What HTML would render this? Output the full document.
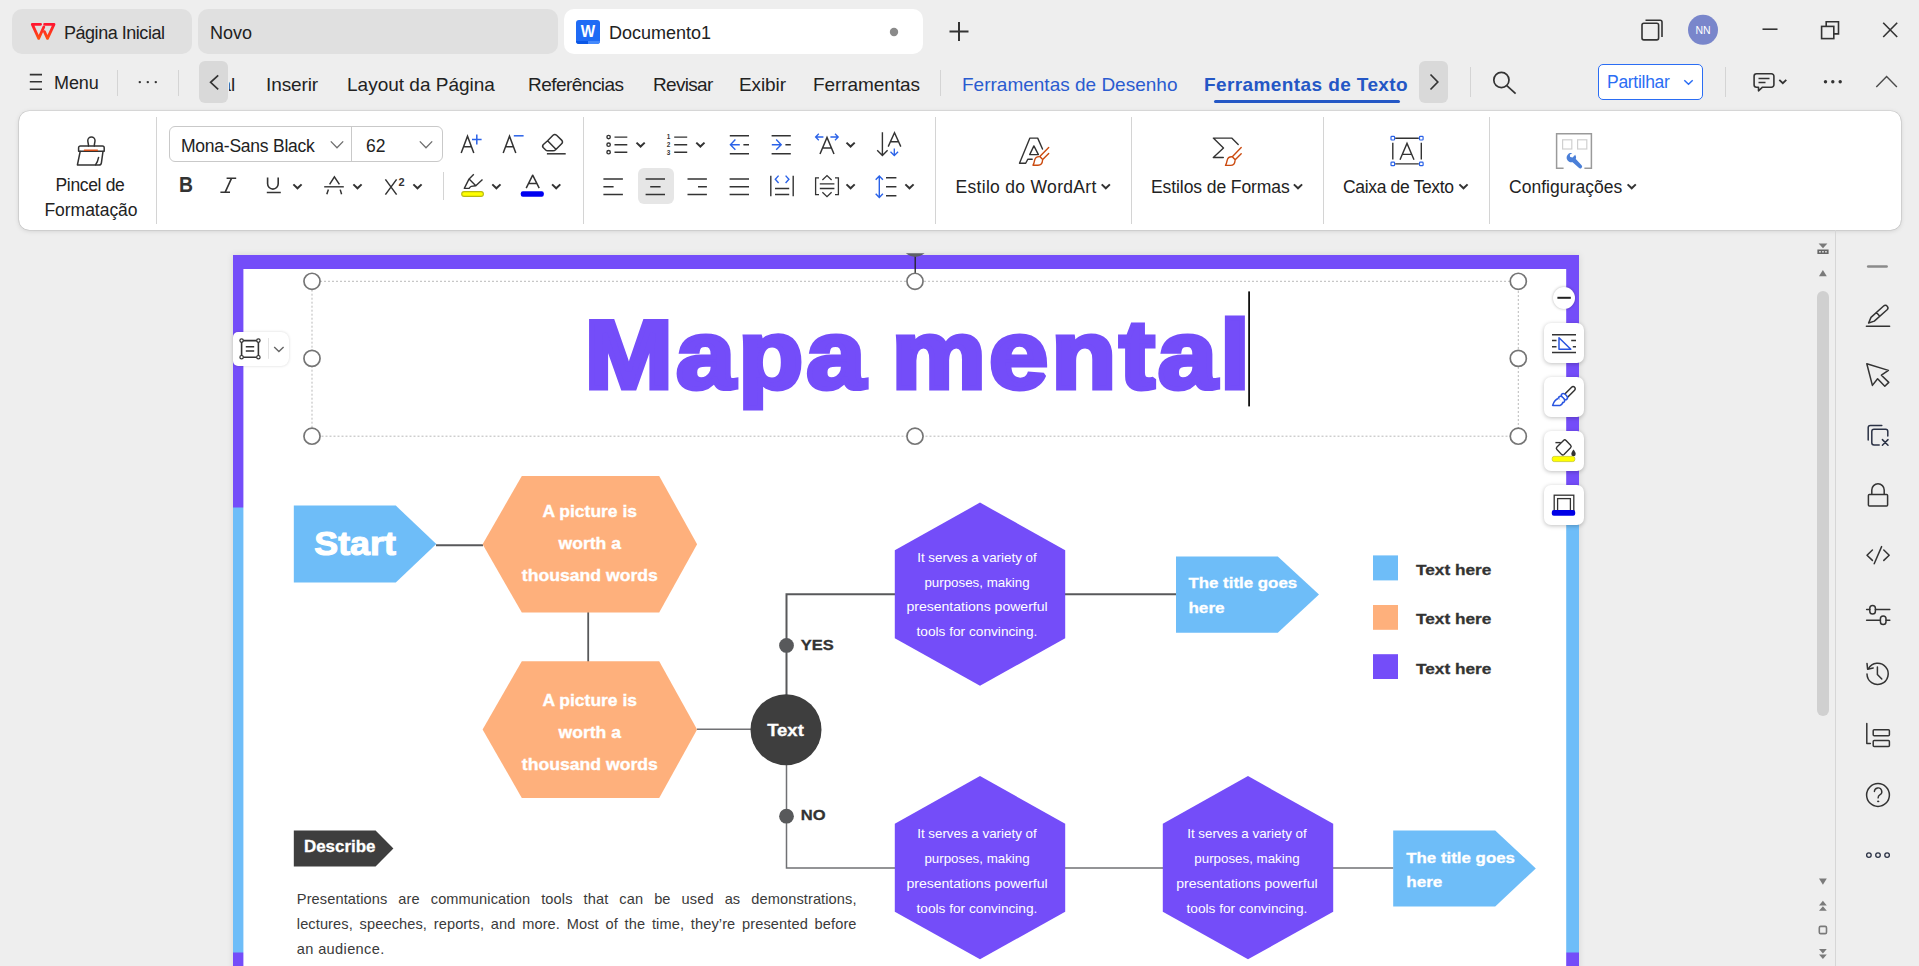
<!DOCTYPE html>
<html lang="pt">
<head>
<meta charset="utf-8">
<title>Documento1</title>
<style>
*{box-sizing:border-box;margin:0;padding:0}
html,body{width:1919px;height:966px;overflow:hidden;background:#eeeeee;font-family:"Liberation Sans",sans-serif;color:#222}
.a{position:absolute}
.t{position:absolute;white-space:nowrap;line-height:1}
svg{position:absolute;overflow:visible}
/* tabs */
.tab{position:absolute;top:9px;height:45px;border-radius:10px;background:#e0e0e0}
.tab.on{background:#fff}
.tabtx{position:absolute;top:23.6px;font-size:18px;color:#222;white-space:nowrap;line-height:1}
/* menu */
.mi{position:absolute;top:75.1px;font-size:19px;color:#222;white-space:nowrap;line-height:1;letter-spacing:0}
.vsep{position:absolute;width:1px;background:#d4d4d4}
.scr{position:absolute;top:61px;width:29px;height:42px;border-radius:6px;background:#d9d9d9}
/* ribbon */
#ribbon{position:absolute;left:19px;top:111px;width:1882px;height:119px;background:#fff;border-radius:10.5px;box-shadow:0 0 0 .6px rgba(0,0,0,.13),0 1px 5px rgba(0,0,0,.13)}
.rl{position:absolute;font-size:17.5px;color:#222;white-space:nowrap;line-height:1;text-align:center}
/* doc */
#page{position:absolute;left:233px;top:255px;width:1346px;height:720px;background:#fff;box-shadow:0 0 7px rgba(0,0,0,.10)}
.fb{position:absolute;left:1544.4px;width:39.4px;height:39.6px;border-radius:7px;background:#fff;box-shadow:0 1px 4px rgba(0,0,0,.25)}
</style>
</head>
<body>
<!-- TAB BAR -->
<div id="tabs">
  <div class="tab" style="left:12px;width:180px"></div>
  <div class="tab" style="left:198px;width:360px"></div>
  <div class="tab on" style="left:564px;width:359px"></div>
  <svg style="left:0;top:0" width="1919" height="60">
    <defs><linearGradient id="wg" x1="0" y1="0" x2="0" y2="1"><stop offset="0" stop-color="#ff1630"/><stop offset="1" stop-color="#ff4d10"/></linearGradient></defs>
    <g fill="none" stroke="url(#wg)" stroke-width="2.8" stroke-linejoin="round" stroke-linecap="round">
      <polyline points="40.6,24.3 32.3,24.3 38.7,38.4 43.8,27"/>
      <polyline points="44.6,24.3 54,24.3 47.5,38.4 44.4,31.6"/>
    </g>
    <rect x="576" y="20" width="24" height="24" rx="3" fill="#1f6bf5"/>
    <path d="M576,41 h12 v3 h-9 a3,3 0 0 1 -3,-3z" fill="#0b57e6"/>
    <path d="M588,41 h12 a3,3 0 0 1 -3,3 h-9z" fill="#4489fc"/>
    <text x="580.8" y="36.6" font-size="17.4" font-weight="bold" fill="#fff" textLength="14.4" lengthAdjust="spacingAndGlyphs" font-family="Liberation Sans, sans-serif">W</text>
    <circle cx="894" cy="32" r="4.2" fill="#8a8a8a"/>
    <path d="M949.5,31.5 h19 M959,22 v19" stroke="#333" stroke-width="2" fill="none"/>
    <g fill="none" stroke="#333" stroke-width="1.6">
      <rect x="1642" y="23.3" width="16.6" height="16.6" rx="1.8"/>
      <path d="M1645.5,20.3 h14.7 a1.8,1.8 0 0 1 1.8,1.8 v14.9"/>
      <path d="M1762.5,29.2 h15"/>
      <rect x="1821.6" y="26.4" width="12.2" height="12.2"/>
      <path d="M1826.2,26 v-4.3 h12.3 v12.2 h-4.5"/>
      <path d="M1883.2,22.8 l14,14.2 M1897.2,22.8 l-14,14.2"/>
    </g>
    <circle cx="1703" cy="29.8" r="15" fill="#7986cb"/>
    <text x="1703" y="33.6" font-size="10.5" fill="#fff" text-anchor="middle" font-family="Liberation Sans, sans-serif">NN</text>
  </svg>
  <div class="tabtx" style="left:64px;letter-spacing:-.47px">Página Inicial</div>
  <div class="tabtx" style="left:210px">Novo</div>
  <div class="tabtx" style="left:609px">Documento1</div>
</div>
<!-- MENU BAR -->
<div id="menu">
  <div class="scr" style="left:199px"></div>
  <div class="scr" style="left:1419px"></div>
  <div class="vsep" style="left:117px;top:70px;height:26px"></div>
  <div class="vsep" style="left:178px;top:70px;height:26px"></div>
  <div class="vsep" style="left:940px;top:70px;height:26px"></div>
  <div class="vsep" style="left:1470px;top:67px;height:30px"></div>
  <div class="vsep" style="left:1725px;top:67px;height:30px"></div>
  <div class="a" style="left:1598px;top:64px;width:105px;height:36px;border:1.5px solid #2a6df4;border-radius:5px;background:#fff"></div>
  <div class="a" style="left:1214px;top:100px;width:186px;height:3px;border-radius:2px;background:#2457c5"></div>
  <svg style="left:0;top:55px" width="1919" height="55" viewBox="0 55 1919 55">
    <g fill="none" stroke="#333" stroke-width="1.6">
      <path d="M29.8,74.6 h12.2 M29.8,81.8 h12.2 M29.8,89.2 h12.2"/>
      <path d="M218.2,75.3 l-7.6,7 l7.6,7" stroke-width="1.7"/>
      <path d="M1430.5,74.5 l7.3,7.5 l-7.3,7.5" stroke-width="1.7"/>
      <circle cx="1501.4" cy="80" r="7.6" stroke-width="1.7"/>
      <path d="M1506.8,85.6 l8.8,8" stroke-width="1.7"/>
      <path d="M1756.5,73.8 h15 a2.4,2.4 0 0 1 2.4,2.4 v8.6 a2.4,2.4 0 0 1 -2.4,2.4 h-9 l-4,3.6 v-3.6 h-2 a2.4,2.4 0 0 1 -2.4,-2.4 v-8.600000000000001 a2.4,2.4 0 0 1 2.4,-2.4z" stroke-linejoin="round"/>
      <path d="M1758.5,78.5 h11 M1758.5,82.5 h7" stroke-width="1.4"/>
      <path d="M1779.3,79.8 l3.5,3.4 l3.5,-3.4" stroke-width="1.8"/>
      <path d="M1876.3,87 l10.3,-10.6 l10.3,10.6" stroke-width="1.4" stroke="#4a4a4a"/>
      <path d="M1684.3,80.3 l4.2,4 l4.2,-4" stroke="#2a6df4" stroke-width="1.5"/>
    </g>
    <g fill="#333">
      <circle cx="139.8" cy="82.1" r="1.2"/><circle cx="147.8" cy="82.1" r="1.2"/><circle cx="155.8" cy="82.1" r="1.2"/>
      <circle cx="1825.5" cy="81.8" r="1.7"/><circle cx="1832.8" cy="81.8" r="1.7"/><circle cx="1840.2" cy="81.8" r="1.7"/>
    </g>
  </svg>
  <div class="mi" style="left:54px;font-size:18px;top:74.1px;letter-spacing:-.1px">Menu</div>
  <div class="a" style="left:229px;top:62px;width:10px;height:40px;overflow:hidden"><div class="mi" style="left:-8.5px;top:13.1px">al</div></div>
  <div class="mi" style="left:266px;letter-spacing:-.1px">Inserir</div>
  <div class="mi" style="left:347px;letter-spacing:0">Layout da Página</div>
  <div class="mi" style="left:528px;letter-spacing:-.53px">Referências</div>
  <div class="mi" style="left:653px;letter-spacing:-.7px">Revisar</div>
  <div class="mi" style="left:739px;letter-spacing:-.1px">Exibir</div>
  <div class="mi" style="left:813px;letter-spacing:-.06px">Ferramentas</div>
  <div class="mi" style="left:962px;color:#2a5bd0;letter-spacing:0">Ferramentas de Desenho</div>
  <div class="mi" style="left:1204px;color:#2457c5;font-weight:bold;letter-spacing:.4px">Ferramentas de Texto</div>
  <div class="mi" style="left:1607px;top:73.8px;font-size:17.5px;color:#2a6df4;letter-spacing:-.29px">Partilhar</div>
</div>
<!-- RIBBON -->
<div id="ribbon"></div>
<div id="rib">
  <div class="vsep" style="left:156px;top:117px;height:107px"></div>
  <div class="vsep" style="left:583px;top:117px;height:107px"></div>
  <div class="vsep" style="left:935px;top:117px;height:107px"></div>
  <div class="vsep" style="left:1131px;top:117px;height:107px"></div>
  <div class="vsep" style="left:1323px;top:117px;height:107px"></div>
  <div class="vsep" style="left:1489px;top:117px;height:107px"></div>
  <div class="vsep" style="left:443px;top:172px;height:28px"></div>
  <div class="a" style="left:169px;top:126px;width:274px;height:36px;border:1px solid #c9c9c9;border-radius:6px;background:#fff"></div>
  <div class="vsep" style="left:351px;top:127px;height:34px;background:#c9c9c9"></div>
  <div class="a" style="left:638px;top:168px;width:36px;height:36px;border-radius:6px;background:#e6e6e6"></div>
  <svg style="left:0;top:111px" width="1919" height="118" viewBox="0 111 1919 118">
    <!-- format painter -->
    <g fill="none" stroke="#333" stroke-width="1.5" stroke-linejoin="round" stroke-linecap="round">
      <path d="M88.4,146 c0.4,-1.6 -0.6,-3.2 -0.6,-5.4 a3.6,3.6 0 0 1 7.2,0 c0,2.2 -1,3.8 -0.6,5.4"/>
      <path d="M80.4,146 h22 a1.8,1.8 0 0 1 1.8,1.800000000000001 v3.4 h-25.6 v-3.4 a1.8,1.8 0 0 1 1.8,-1.8z"/>
      <path d="M80.2,151.4 l-2.8,13.6 h21.400000000000002 a2.6,2.6 0 0 0 2.6,-2.2 l1.6,-11.4"/>
      <path d="M98.6,157.4 c-0.6,3 -1.2,5 -3,7.4"/>
      <path d="M84.4,150.2 h13" stroke="#d8511a" stroke-width="1.4"/>
    </g>
    <!-- font box chevrons -->
    <g fill="none" stroke="#6e6e6e" stroke-width="1.3">
      <path d="M330.8,141.4 l6.2,6.4 l6.2,-6.4"/>
      <path d="M419.8,141.4 l6.2,6.4 l6.2,-6.4"/>
    </g>
    <!-- A+ A- -->
    <g fill="none" stroke="#333" stroke-width="1.5">
      <path d="M461.2,153 l6.3,-16.8 l6.3,16.8 M463.6,146.8 h7.8"/>
      <path d="M503.2,153 l6.3,-16.8 l6.3,16.8 M505.6,146.8 h7.8"/>
      <path d="M472,139.5 h9.6 M476.8,134.6 v9.8" stroke="#2a62e8"/>
      <path d="M513.8,135.8 h9.8" stroke="#2a62e8"/>
      <!-- eraser -->
      <path d="M547.6,140.7 L553,135.3 Q554.8,133.6 556.6,135.3 L561.6,140.1 Q563.4,141.9 561.6,143.7 L555.6,149.7 Q554.5,150.8 553,150.8 L547.6,150.8 Q546.5,150.8 545.7,150 L543.4,147.8 Q541.8,146.1 543.4,144.5 Z M547.6,140.7 L555.9,149.3" stroke-linejoin="round"/>
      <path d="M546.9,153.8 h18.8"/>
    </g>
    <!-- I U strike X2 -->
    <g fill="none" stroke="#333" stroke-width="1.6">
      <path d="M226.6,178.2 h9.6 M220.4,192.2 h9.6 M231.6,178.2 l-6.4,14"/>
      <path d="M267.6,177.6 v6.2 a5.3,5.3 0 0 0 10.6,0 v-6.2 M266.8,192.5 h14" />
      <path d="M329.6,184.4 L334.4,176.8 L339.4,184.4 M328.4,189.6 L326.8,194.2 M340.2,189.6 L341.6,194.2" stroke-width="1.5"/>
      <path d="M324.2,186.8 h19.6" stroke-width="1.4"/>
      <path d="M385.4,179.4 l11.2,15.2 M396.6,179.4 l-11.2,15.2" stroke-width="1.5"/>
    </g>
    <!-- highlighter / font color -->
    <g fill="none" stroke="#333" stroke-width="1.4" stroke-linejoin="round">
      <path d="M473.8,174.3 L469.1,178.9 L464.3,188.4 H469.1 C469.8,187.4 470.4,186.6 471.2,186.4 L475.8,185.8 L482.5,179.4 M469.6,179.6 L475.8,185.8"/>
      <path d="M526.2,188.2 l6.5,-13 l6.5,13 M528.8,183.4 h7.8" stroke-width="1.5"/>
    </g>
    <rect x="461.7" y="191.6" width="21.7" height="4.8" rx="2.4" fill="#ffff00" stroke="#b9b910" stroke-width="1.1"/>
    <rect x="520.8" y="191.2" width="23" height="5.6" rx="2" fill="#0000f0"/>
    <path d="M293.4,184.4 l4.1,3.9 l4.1,-3.9" stroke="#333" stroke-width="2" fill="none"/>
    <path d="M353.4,184.4 l4.1,3.9 l4.1,-3.9" stroke="#333" stroke-width="2" fill="none"/>
    <path d="M413.4,184.4 l4.1,3.9 l4.1,-3.9" stroke="#333" stroke-width="2" fill="none"/>
    <path d="M492.29999999999995,184.4 l4.1,3.9 l4.1,-3.9" stroke="#333" stroke-width="2" fill="none"/>
    <path d="M552.1,184.4 l4.1,3.9 l4.1,-3.9" stroke="#333" stroke-width="2" fill="none"/>
    <path d="M846.5,184.4 l4.1,3.9 l4.1,-3.9" stroke="#333" stroke-width="2" fill="none"/>
    <path d="M905.4,184.4 l4.1,3.9 l4.1,-3.9" stroke="#333" stroke-width="2" fill="none"/>
    <path d="M1101.7,184.4 l4.1,3.9 l4.1,-3.9" stroke="#333" stroke-width="2" fill="none"/>
    <path d="M1293.9,184.4 l4.1,3.9 l4.1,-3.9" stroke="#333" stroke-width="2" fill="none"/>
    <path d="M1459.4,184.4 l4.1,3.9 l4.1,-3.9" stroke="#333" stroke-width="2" fill="none"/>
    <path d="M1627.6000000000001,184.4 l4.1,3.9 l4.1,-3.9" stroke="#333" stroke-width="2" fill="none"/>
    <path d="M636.5,142.6 l4.1,3.9 l4.1,-3.9" stroke="#333" stroke-width="2" fill="none"/>
    <path d="M696.3,142.6 l4.1,3.9 l4.1,-3.9" stroke="#333" stroke-width="2" fill="none"/>
    <path d="M846.5,142.6 l4.1,3.9 l4.1,-3.9" stroke="#333" stroke-width="2" fill="none"/>
    <!-- bullets -->
    <g fill="none" stroke="#333" stroke-width="1.4">
      <circle cx="608.6" cy="137.1" r="1.7"/><circle cx="608.6" cy="144.7" r="1.7"/><circle cx="608.6" cy="152.2" r="1.7"/>
      <path d="M614.5,137.1 h12.8 M614.5,144.7 h12.8 M614.5,152.2 h12.8"/>
      <path d="M674.2,137.1 h13 M674.2,144.7 h13 M674.2,152.2 h13"/>
      <!-- outdent / indent -->
      <path d="M729.8,135.7 h19.2 M729.8,153.7 h19.2 M743.4,144.7 h5.6"/>
      <path d="M771.6,135.7 h19.2 M771.6,153.7 h19.2 M785.4,144.7 h5.4"/>
      <g stroke="#2a62e8"><path d="M739.8,144.7 h-9.400000000000001 M735.4,139.6 l-5,5.1 l5,5.1"/><path d="M771.8,144.7 h9.4 M776.2,139.6 l5,5.1 l-5,5.1"/></g>
      <!-- A spacing -->
      <path d="M820,154 l7,-16.6 l7,16.6 M822.6,148 h8.8" stroke-width="1.5"/>
      <g stroke="#2a62e8" stroke-width="1.3"><path d="M823.4,137 h-7.8 M818.8,133.8 l-3.2,3.2 l3.2,3.2"/><path d="M830.4,137 h7.800000000000001 M835,133.8 l3.2,3.2 l-3.2,3.2"/></g>
      <!-- sort -->
      <path d="M882.4,132.2 v23 M877.2,150.200000000000003 l5.2,5.2 l5.2,-5.2"/>
      <path d="M888.2,146.6 l6.3,-14 l6.3,14 M890.6,141.8 h7.8" stroke-width="1.4"/>
      <path d="M894.3,148.6 v6.6 M890.5,151.8 l3.8,3.7 l3.8,-3.7" stroke="#2a62e8" stroke-width="1.3"/>
      <!-- aligns -->
      <path d="M603.4,179 h19.5 M603.4,186.8 h10.2 M603.4,194.5 h19.5"/>
      <path d="M645.6,179 h19.4 M650.2,186.8 h10.4 M645.6,194.5 h19.4"/>
      <path d="M687.5,179 h19.4 M698,186.8 h8.9 M687.5,194.5 h19.4"/>
      <path d="M729.6,179 h19.4 M729.6,186.8 h19.4 M729.6,194.5 h19.4"/>
      <!-- distributed -->
      <path d="M770.8,175.8 v20.4 M793.2,175.8 v20.4 M775,188.5 h14.2 M775,194.5 h14.2"/>
      <path d="M778.6,175.6 l-3.3,3.700000000000001 l3.3,3.7 M785.6,175.6 l3.3,3.7 l-3.3,3.7" stroke="#2a62e8"/>
      <!-- vertical align brackets -->
      <path d="M819,177.8 h-3.4 v16.8 h3.4 M835,177.8 h3.4 v16.8 h-3.4 M819.8,183.9 h14.6 M819.8,188.5 h14.6 M822.4,180 l4.6,-4.4 l4.6,4.4 M822.4,192.2 l4.6,4.400000000000001 l4.6,-4.4" stroke-width="1.3"/>
      <!-- line spacing -->
      <path d="M886,177.7 h10.4 M886,186.8 h10.4 M886,195.7 h10.4"/>
      <path d="M879.3,176 v21.6 M875.7,179.8 l3.6,-3.8 l3.6,3.8 M875.7,193.8 l3.6,3.8 l3.6,-3.8" stroke="#2a62e8"/>
    </g>
    <!-- WordArt icon -->
    <g fill="none" stroke-width="1.4" stroke-linejoin="round" stroke-linecap="round">
      <path d="M1032.2,159.2 H1027.8 L1025.7,163.3 H1019.5 L1029.9,138.1 H1037.7 L1042.5,149 M1033.9,145.9 L1029.7,154.6 H1038.4 Z" stroke="#333"/>
      <path d="M1048.7,147.4 L1039.8,156.5 M1048.7,153.6 L1042.7,159.6 M1039.8,156.5 L1042.7,159.6 M1039.7,156.6 C1036.6,156.4 1035,158.4 1034.6,160.4 C1034.2,162.4 1033.8,164 1033,165.2 H1038 C1040.6,165.2 1042.4,163.2 1042.6,160" stroke="#cb4a0f"/>
      <!-- sigma -->
      <path d="M1238.2,144.5 L1231.7,138.1 H1213.3 L1223.5,148 L1213.3,157.5 H1223.3" stroke="#333"/>
      <path d="M1048.7,147.4 L1039.8,156.5 M1048.7,153.6 L1042.7,159.6 M1039.8,156.5 L1042.7,159.6 M1039.7,156.6 C1036.6,156.4 1035,158.4 1034.6,160.4 C1034.2,162.4 1033.8,164 1033,165.2 H1038 C1040.6,165.2 1042.4,163.2 1042.6,160" stroke="#cb4a0f" transform="translate(192.5,0.2)"/>
    </g>
    <!-- text box icon -->
    <g fill="none" stroke="#333" stroke-width="1.4">
      <path d="M1395.2,138.2 h23.6 M1395.2,163.9 h23.6 M1392.8,142.8 v16.8 M1421.3,142.8 v16.8"/>
      <path d="M1400,159.8 l7,-16.4 l7,16.4 M1402.4,154.4 h9.2"/>
      <g stroke="#2a62e8" fill="#fff" stroke-width="1.2"><rect x="1391" y="136.4" width="3.6" height="3.6" rx=".8"/><rect x="1419.5" y="136.4" width="3.6" height="3.6" rx=".8"/><rect x="1391" y="162.1" width="3.6" height="3.6" rx=".8"/><rect x="1419.5" y="162.1" width="3.6" height="3.6" rx=".8"/></g>
    </g>
    <!-- config icon -->
    <g fill="none" stroke-width="1.5">
      <path d="M1563.6,168.2 h-7 v-34.4 h34.8 v34.4 h-7" stroke="#9a9a9a"/>
      <rect x="1562.6" y="139.8" width="9.2" height="9.2" stroke="#d0d0d0" stroke-width="1.2"/>
      <rect x="1577.6" y="139.8" width="9.2" height="9.2" stroke="#d0d0d0" stroke-width="1.2"/>
    </g>
    <path d="M1572.4,153 a4.8,4.8 0 0 0 -5.6,6 a4.8,4.800000000000001 0 0 0 5.8,3.2 l6.2,5.6 a1.9,1.9 0 0 0 2.8,-2.6 l-5.8,-6.2 a4.8,4.8 0 0 0 -0.6,-4.2 l-2.6,2.8 l-2.4,-0.6 l-0.4,-2.200000000000001z" fill="#4a7fd8"/>
    <text x="668.6" y="139.2" font-size="6.4" font-weight="bold" fill="#333" text-anchor="middle" font-family="Liberation Sans, sans-serif">1</text>
    <text x="668.6" y="146.9" font-size="6.4" font-weight="bold" fill="#333" text-anchor="middle" font-family="Liberation Sans, sans-serif">2</text>
    <text x="668.6" y="154.6" font-size="6.4" font-weight="bold" fill="#333" text-anchor="middle" font-family="Liberation Sans, sans-serif">3</text>
    <text x="401.6" y="185.8" font-size="11" font-weight="bold" fill="#333" text-anchor="middle" font-family="Liberation Sans, sans-serif">2</text>
  </svg>
  <div class="rl" style="left:40px;width:100px;top:177.4px;letter-spacing:-.33px">Pincel de</div>
  <div class="rl" style="left:40px;width:102px;top:201.7px;letter-spacing:-.03px">Formatação</div>
  <div class="rl" style="left:181px;top:137.7px;letter-spacing:-.24px;text-align:left">Mona-Sans Black</div>
  <div class="rl" style="left:366px;top:137.7px;text-align:left">62</div>
  <div class="t" style="left:179.4px;top:173.6px;font-size:22px;font-weight:bold;color:#333;transform:scaleX(.88);transform-origin:0 0">B</div>
  <div class="rl" style="left:955.5px;top:178.8px;letter-spacing:.31px;text-align:left">Estilo do WordArt</div>
  <div class="rl" style="left:1151px;top:178.8px;letter-spacing:-.08px;text-align:left">Estilos de Formas</div>
  <div class="rl" style="left:1343px;top:178.8px;letter-spacing:-.34px;text-align:left">Caixa de Texto</div>
  <div class="rl" style="left:1509px;top:178.8px;letter-spacing:.03px;text-align:left">Configurações</div>
</div>
<!-- DOCUMENT -->
<div id="page"></div>
<svg style="left:0;top:240px" width="1919" height="726" viewBox="0 240 1919 726">
  <defs>
    <linearGradient id="psh" x1="0" y1="0" x2="1" y2="0"><stop offset="0" stop-color="#000" stop-opacity=".12"/><stop offset="1" stop-color="#000" stop-opacity="0"/></linearGradient>
    <linearGradient id="pshl" x1="1" y1="0" x2="0" y2="0"><stop offset="0" stop-color="#000" stop-opacity=".08"/><stop offset="1" stop-color="#000" stop-opacity="0"/></linearGradient>
  </defs>
  <!-- page frame -->
  <rect x="233" y="255" width="1346" height="711" fill="#744df9"/>
  <rect x="233" y="507.5" width="1346" height="445" fill="#6ebdf8"/>
  <rect x="243.4" y="269" width="1322.8" height="697" fill="#fff"/>
  <!-- connectors -->
  <g fill="none" stroke="#58595b" stroke-width="2">
    <path d="M436,545.2 H483"/>
    <path d="M588.2,612 V662" stroke-width="1.8"/>
    <path d="M895.5,594.15 H786.5 V700"/>
    <path d="M1065,594.15 H1176"/>
  </g>
  <g fill="none" stroke="#707174" stroke-width="1.5">
    <path d="M697,729.2 H751"/>
    <path d="M786.5,760 V867.9 H895.5"/>
    <path d="M1065,867.9 H1163.5 M1332.5,867.9 H1393.5"/>
  </g>
  <!-- shapes -->
  <polygon points="293.8,505.6 395.8,505.6 436.3,544.1 395.8,582.6 293.8,582.6" fill="#6ebdf8"/>
  <polygon points="482.6,544.3 521.8,475.99999999999994 659.2,475.99999999999994 697.1,544.3 659.2,612.5999999999999 521.8,612.5999999999999" fill="#feb07c"/>
  <polygon points="482.6,729.6 521.8,661.3000000000001 659.2,661.3000000000001 697.1,729.6 659.2,797.9 521.8,797.9" fill="#feb07c"/>
  <circle cx="786" cy="729.7" r="35.5" fill="#3e3e3e"/>
  <circle cx="786.5" cy="645.4" r="7.4" fill="#58595b"/>
  <circle cx="786.5" cy="816.2" r="7.4" fill="#58595b"/>
  <polygon points="980,502.6 1065.2,550.2 1065.2,638.2 980,685.8000000000001 894.8,638.2 894.8,550.2" fill="#744df9"/>
  <polygon points="980,776.1 1065.2,823.7 1065.2,911.7 980,959.3000000000001 894.8,911.7 894.8,823.7" fill="#744df9"/>
  <polygon points="1248,776.1 1333.2,823.7 1333.2,911.7 1248,959.3000000000001 1162.8,911.7 1162.8,823.7" fill="#744df9"/>
  <polygon points="1176,556.4 1277.8,556.4 1319,594.6 1277.8,632.8 1176,632.8" fill="#6ebdf8"/>
  <polygon points="1393.2,830.4 1495.2,830.4 1535.8,868.4 1495.2,906.4 1393.2,906.4" fill="#6ebdf8"/>
  <rect x="1373" y="555.4" width="25" height="25" fill="#6ebdf8"/>
  <rect x="1373" y="605" width="25" height="24.8" fill="#feb07c"/>
  <rect x="1373" y="654.2" width="25" height="24.8" fill="#744df9"/>
  <polygon points="293.8,830.4 375.6,830.4 393.4,848.4 375.6,866.4 293.8,866.4" fill="#3e3e3e"/>
  <!-- texts -->
  <g font-family="Liberation Sans, sans-serif" font-weight="bold" fill="#fff">
    <text x="314.3" y="555" font-size="33" textLength="81.6" lengthAdjust="spacingAndGlyphs" stroke="#fff" stroke-width="1.1">Start</text>
    <g font-size="16.5" stroke="#fff" stroke-width=".35">
      <text x="542.5" y="517.0" textLength="94.5" lengthAdjust="spacingAndGlyphs">A picture is</text>
      <text x="558.5" y="548.9" textLength="62.5" lengthAdjust="spacingAndGlyphs">worth a</text>
      <text x="521.8" y="580.8" textLength="136" lengthAdjust="spacingAndGlyphs">thousand words</text>
      <text x="542.5" y="706.2" textLength="94.5" lengthAdjust="spacingAndGlyphs">A picture is</text>
      <text x="558.5" y="738.1" textLength="62.5" lengthAdjust="spacingAndGlyphs">worth a</text>
      <text x="521.8" y="770.0" textLength="136" lengthAdjust="spacingAndGlyphs">thousand words</text>
    </g>
    <text x="767.2" y="736.2" font-size="16" textLength="36.6" lengthAdjust="spacingAndGlyphs" stroke="#fff" stroke-width=".3">Text</text>
    <g font-size="15.5" stroke="#fff" stroke-width=".3">
      <text x="1188.4" y="587.8" textLength="108.8" lengthAdjust="spacingAndGlyphs">The title goes</text>
      <text x="1188.4" y="612.5" textLength="36.2" lengthAdjust="spacingAndGlyphs">here</text>
      <text x="1406.2" y="862.5" textLength="108.8" lengthAdjust="spacingAndGlyphs">The title goes</text>
      <text x="1406.2" y="887.2" textLength="36.2" lengthAdjust="spacingAndGlyphs">here</text>
    </g>
    <text x="304" y="852" font-size="16" textLength="71.4" lengthAdjust="spacingAndGlyphs" stroke="#fff" stroke-width=".3">Describe</text>
  </g>
  <g font-family="Liberation Sans, sans-serif" font-weight="bold" fill="#333" font-size="15.5" stroke="#333" stroke-width=".3">
    <text x="800.8" y="650.3" textLength="33" lengthAdjust="spacingAndGlyphs">YES</text>
    <text x="800.8" y="820" textLength="24.8" lengthAdjust="spacingAndGlyphs">NO</text>
    <text x="1416" y="574.7" textLength="75.4" lengthAdjust="spacingAndGlyphs">Text here</text>
    <text x="1416" y="623.7" textLength="75.4" lengthAdjust="spacingAndGlyphs">Text here</text>
    <text x="1416" y="673.5" textLength="75.4" lengthAdjust="spacingAndGlyphs">Text here</text>
  </g>
  <g font-family="Liberation Sans, sans-serif" fill="#fff" font-size="13">
      <text x="917.2" y="561.7" textLength="119.5" lengthAdjust="spacingAndGlyphs">It serves a variety of</text>
      <text x="924.4" y="586.5" textLength="105.3" lengthAdjust="spacingAndGlyphs">purposes, making</text>
      <text x="906.4" y="611.3" textLength="141.3" lengthAdjust="spacingAndGlyphs">presentations powerful</text>
      <text x="916.5" y="636.1" textLength="120.9" lengthAdjust="spacingAndGlyphs">tools for convincing.</text>
      <text x="917.2" y="838.2" textLength="119.5" lengthAdjust="spacingAndGlyphs">It serves a variety of</text>
      <text x="924.4" y="863.0" textLength="105.3" lengthAdjust="spacingAndGlyphs">purposes, making</text>
      <text x="906.4" y="887.8" textLength="141.3" lengthAdjust="spacingAndGlyphs">presentations powerful</text>
      <text x="916.5" y="912.6" textLength="120.9" lengthAdjust="spacingAndGlyphs">tools for convincing.</text>
      <text x="1187.2" y="838.2" textLength="119.5" lengthAdjust="spacingAndGlyphs">It serves a variety of</text>
      <text x="1194.3" y="863.0" textLength="105.3" lengthAdjust="spacingAndGlyphs">purposes, making</text>
      <text x="1176.3" y="887.8" textLength="141.3" lengthAdjust="spacingAndGlyphs">presentations powerful</text>
      <text x="1186.5" y="912.6" textLength="120.9" lengthAdjust="spacingAndGlyphs">tools for convincing.</text>
  </g>
  
  <!-- title -->
  <text transform="translate(584.8,388.4) scale(1.1,1)" font-family="Liberation Sans, sans-serif" font-weight="bold" font-size="96.0" fill="#744df9" stroke="#744df9" stroke-width="5.0" stroke-linejoin="miter" stroke-miterlimit="1.6" letter-spacing="3.2" word-spacing="-9.0">Mapa mental</text>
  <rect x="1248.2" y="291.4" width="1.8" height="115" fill="#111"/>
  <!-- selection -->
  <rect x="312" y="281.3" width="1206.3" height="154.9" fill="none" stroke="#b9b9b9" stroke-width="1" stroke-dasharray="2,2"/>
  <path d="M915.2,256 V273" stroke="#222" stroke-width="1.3"/>
  <path d="M905.8,253.2 h18.8 q-9.4,7.6 -18.8,0z" fill="#5d5f66"/>
  <g fill="#fff" stroke="#757575" stroke-width="1.7">
    <circle cx="312" cy="281.3" r="8.05"/><circle cx="915" cy="281.3" r="8.05"/><circle cx="1518.3" cy="281.3" r="8.05"/>
    <circle cx="312" cy="358.4" r="8.05"/><circle cx="1518.3" cy="358.4" r="8.05"/>
    <circle cx="312" cy="436.2" r="8.05"/><circle cx="915" cy="436.2" r="8.05"/><circle cx="1518.3" cy="436.2" r="8.05"/>
  </g>
</svg>
<div class="a" style="left:296.8px;top:886.5px;width:559.8px;font-size:14.6px;line-height:25.05px;color:#3a3a3a;letter-spacing:.1px"><div style="text-align:justify;text-align-last:justify;white-space:nowrap">Presentations are communication tools that can be used as demonstrations,</div><div style="text-align:justify;text-align-last:justify;white-space:nowrap">lectures, speeches, reports, and more. Most of the time, they’re presented before</div><div style="letter-spacing:.35px">an audience.</div></div>
<!-- FLOATING BUTTONS -->
<div id="floats">
  <div class="a" style="left:233px;top:331.5px;width:55.5px;height:34.6px;border-radius:5px 8px 8px 5px;background:#fff;box-shadow:0 0 3px rgba(0,0,0,.16)"></div>
  <div class="a" style="left:1553px;top:286.7px;width:22px;height:22px;border-radius:50%;background:#fff;box-shadow:0 0 3px rgba(0,0,0,.3)"></div>
  <div class="fb" style="top:323.4px"></div>
  <div class="fb" style="top:377px"></div>
  <div class="fb" style="top:431px"></div>
  <div class="fb" style="top:485px"></div>
  <svg style="left:0;top:240px" width="1919" height="726" viewBox="0 240 1919 726">
    <g fill="none" stroke="#333" stroke-width="1.6">
      <rect x="241.6" y="340.6" width="16.8" height="16.6" rx="2"/>
      <path d="M245.8,346.8 h8.4 M245.8,351 h8.4" stroke-width="1.5"/>
      <g fill="#fff" stroke-width="1.2"><circle cx="241.6" cy="340.6" r="1.7"/><circle cx="258.4" cy="340.6" r="1.7"/><circle cx="241.6" cy="357.2" r="1.7"/><circle cx="258.4" cy="357.2" r="1.7"/></g>
      <path d="M268.5,338 v20.8" stroke="#e4e4e4" stroke-width="1"/>
      <path d="M274.2,347 l4.7,4.6 l4.7,-4.6" stroke="#666" stroke-width="1.4"/>
      <path d="M1557.4,297.8 h13.4" stroke="#222" stroke-width="2"/>
      <!-- wrap icon -->
      <path d="M1552,334.8 h24 M1552,352.5 h24 M1552,340.6 h4.5 M1571.2,340.6 h4.8 M1552,346.7 h4.5 M1572.8,346.7 h3.2" stroke-width="1.5"/>
      <path d="M1559,337.8 v11.5 h11.8z" stroke="#2a55e0" stroke-width="1.5" stroke-linejoin="round"/>
      <!-- brush -->
      <path d="M1564.6,394.2 l7,-7 a2.1,2.1 0 0 1 3,0 a2.1,2.1 0 0 1 0,3 l-7,7" stroke-width="1.5" stroke-linejoin="round"/>
      <g stroke="#2a55e0" stroke-width="1.5" stroke-linejoin="round">
        <ellipse cx="1564.4" cy="396.6" rx="2.2" ry="3.6" transform="rotate(-45 1564.4 396.6)"/>
        <ellipse cx="1561.6" cy="399.4" rx="2.2" ry="3.6" transform="rotate(-45 1561.6 399.4)" fill="#fff"/>
        <path d="M1558.4,398.6 c-3,0.6 -4.6,3.4 -5.8,6.8 h7.6 c1.6,-0.8 2.4,-2 2.8,-3.400000000000001" fill="#fff"/>
      </g>
      <!-- bucket -->
      <path d="M1555.4,442.6 h5.4" stroke-width="1.4"/>
      <path d="M1562.6,440.4 a1.8,1.8 0 0 1 2.5,-0.3 l5.2,4.2 a1.8,1.8 0 0 1 0.3,2.5 l-5.6,7.4 a1.8,1.8 0 0 1 -2.5,0.3 l-5.2,-4.2 a1.8,1.8 0 0 1 -0.3,-2.5 z" stroke-width="1.4" stroke-linejoin="round" transform="rotate(8 1563 447)"/>
      <path d="M1573.5,449.6 c1.4,2 2.2,3.2 2.2,4.4 a2.2,2.2 0 0 1 -4.4,0 c0,-1.2 0.8,-2.4 2.2,-4.4z" fill="#333" stroke="none"/>
      <!-- border icon -->
      <rect x="1554.2" y="495.2" width="19.6" height="17" stroke-width="1.3"/>
      <rect x="1557.6" y="498.6" width="12.8" height="14" stroke-width="1.3"/>
    </g>
    <rect x="1552.2" y="456.4" width="22.6" height="5.2" rx="2" fill="#ffff00" stroke="#c9c92a" stroke-width=".8"/>
    <rect x="1551.8" y="510" width="23.4" height="5.8" rx="2" fill="#0000e6"/>
  </svg>
</div>
<!-- RIGHT SIDE -->
<div id="side">
  <div class="a" style="left:1835px;top:230px;width:1px;height:736px;background:#d6d6d6"></div>
  <div class="a" style="left:1817px;top:290.5px;width:12px;height:425.5px;border-radius:6px;background:#d0d0d0"></div>
  <svg style="left:0;top:240px" width="1919" height="726" viewBox="0 240 1919 726">
    <g fill="#7a7a7a">
      <path d="M1818.6,243.6 h8.8 l-4.4,4.6z"/>
      <path d="M1817.4,249.6 h11.2 v4.4 h-11.2z M1819.2,251 v1.6 h1.5 v-1.6z M1822.2,251 v1.6 h1.5 v-1.6z M1825.2,251 v1.6 h1.5 v-1.6z" fill-rule="evenodd" fill="#666"/>
      <path d="M1819,276.2 h7.8 l-3.9,-6.2z"/>
      <path d="M1819,878.6 h7.8 l-3.9,6.2z"/>
      <path d="M1819,905.4 h7.8 l-3.9,-4.6z M1819,910.8 h7.8 l-3.9,-4.6z"/>
      <path d="M1819,949 h7.8 l-3.9,4.6z M1819,954.4 h7.8 l-3.9,4.6z"/>
    </g>
    <rect x="1819.3" y="926.4" width="7.2" height="7.2" rx="1.4" fill="none" stroke="#7a7a7a" stroke-width="1.6"/>
    <path d="M1868.2,266.5 h18.4" stroke="#8a8a8a" stroke-width="2.6" stroke-linecap="round"/>
    <g fill="none" stroke="#333" stroke-width="1.5" stroke-linejoin="round" stroke-linecap="round">
      <!-- pen -->
      <path d="M1866.4,326.2 h23.2"/>
      <path d="M1868.6,323 l2.4,-5.6 l12.6,-11.4 a2.5,2.5 0 0 1 3.6,0.2 a2.5,2.5 0 0 1 -0.1,3.5 l-12.8,11.4 z M1876.4,312.6 l3.4,3.6"/>
      <!-- cursor -->
      <path d="M1866.8,363.8 l5.6,21.6 l5.200000000000001,-6.6 l7.2,7.4 l4,-3.8 l-7.4,-7.2 l7,-4.8z"/>
      <!-- copy x -->
      <g stroke="#2b3245">
        <path d="M1868.2,440 v-12.4 a2.2,2.2 0 0 1 2.2,-2.2 h11.4"/>
        <path d="M1879.2,445 h-5.200000000000001 a2.2,2.2 0 0 1 -2.2,-2.2 v-11.4 a2.2,2.2 0 0 1 2.2,-2.2 h11.600000000000001 a2.2,2.2 0 0 1 2.2,2.2 v4.600000000000001"/>
        <path d="M1882.4,439.6 l5.6,5.6 M1888,439.6 l-5.6,5.6"/>
      </g>
      <!-- lock -->
      <rect x="1868.4" y="494.4" width="19.2" height="11.6" rx="1"/>
      <path d="M1871.8,494.2 v-4.2 a6.2,6.2 0 0 1 12.4,0 v4.2"/>
      <!-- code -->
      <path d="M1872.4,550 l-5.4,5.2 l5.4,5.2 M1883.8,550 l5.4,5.2 l-5.4,5.2 M1881.6,546.6 l-7.4,17.2"/>
      <!-- sliders -->
      <path d="M1866.6,609.6 h3.2 M1875.4,609.6 h14.4 M1866.6,620.3 h13.8 M1886,620.3 h3.8"/>
      <rect x="1869.8" y="605.4" width="5.6" height="8.6" rx="2.8"/>
      <rect x="1880.4" y="616" width="5.6" height="8.6" rx="2.8"/>
      <!-- history -->
      <path d="M1868.4,668.6 a10.6,10.6 0 1 1 -1.4,5.4"/>
      <path d="M1867,663.4 l0.6,5.8 l5.6,-1.2"/>
      <path d="M1877.4,667 v7.4 l4.4,4.6"/>
      <!-- tree -->
      <path d="M1866.8,723.4 v20.2 h3.6"/>
      <rect x="1873.2" y="729.8" width="16.2" height="6" rx="1"/>
      <rect x="1873.2" y="740.4" width="16.2" height="6" rx="1"/>
      <!-- help -->
      <circle cx="1878" cy="795" r="11.4"/>
      <path d="M1874.4,791.6 a3.7,3.7 0 1 1 5.4,3.3 c-1.2,0.7 -1.7,1.5 -1.7,3" stroke-width="1.4"/>
      <circle cx="1878.1" cy="801.4" r=".6" fill="#333" stroke-width="1"/>
      <!-- ooo -->
      <g stroke="#2b3245" stroke-width="1.3"><circle cx="1868.9" cy="855.1" r="2.3"/><circle cx="1878" cy="855.1" r="2.3"/><circle cx="1887.1" cy="855.1" r="2.3"/></g>
    </g>
  </svg>
</div>
</body>
</html>
